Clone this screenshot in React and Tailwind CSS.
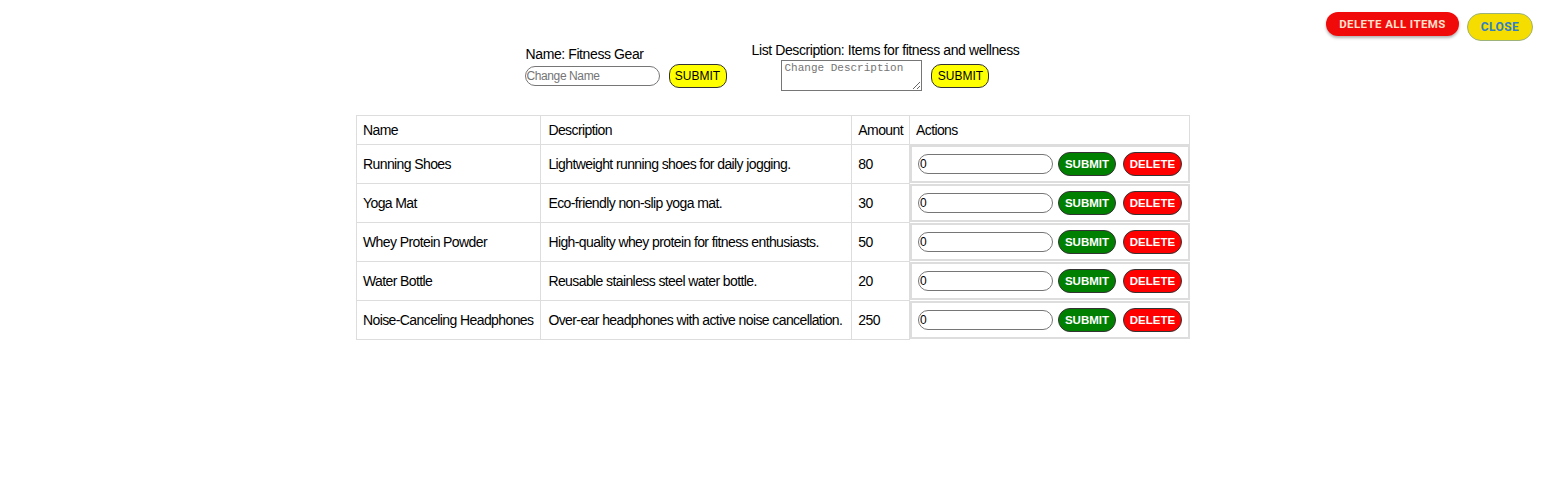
import { useState } from 'react';

const items = [
  { id: 1, name: 'Running Shoes', description: 'Lightweight running shoes for daily jogging.', amount: 80 },
  { id: 2, name: 'Yoga Mat', description: 'Eco-friendly non-slip yoga mat.', amount: 30 },
  { id: 3, name: 'Whey Protein Powder', description: 'High-quality whey protein for fitness enthusiasts.', amount: 50 },
  { id: 4, name: 'Water Bottle', description: 'Reusable stainless steel water bottle.', amount: 20 },
  { id: 5, name: 'Noise-Canceling Headphones', description: 'Over-ear headphones with active noise cancellation.', amount: 250 },
];

function ItemRow({ item }) {
  const [value, setValue] = useState('0');
  return (
    <tr>
      <td className="border border-[#dddddd] pl-[6px] pr-[7px] py-[11px] whitespace-nowrap">{item.name}</td>
      <td className="border border-[#dddddd] pl-[7px] pr-[9px] py-[11px] whitespace-nowrap">{item.description}</td>
      <td className="border border-[#dddddd] pl-[6px] pr-[6px] py-[11px] whitespace-nowrap">{item.amount}</td>
      <td className="border-2 border-[#dddddd] pl-[6px] py-[5px] flex items-center">
        <input
          value={value}
          onChange={(e) => setValue(e.target.value)}
          className="w-[135px] h-[20px] rounded-full border border-[#767676] px-[1px] text-[12px] tracking-normal text-black outline-none"
        />
        <button className="ml-[5px] h-[24px] w-[58px] rounded-[12px] border border-[#333] bg-[#008000] text-[11.5px] font-bold tracking-normal text-white">
          SUBMIT
        </button>
        <button className="ml-[7px] h-[24px] w-[59px] rounded-[12px] border border-[#333] bg-[#ff0000] text-[11.5px] font-bold tracking-normal text-white">
          DELETE
        </button>
      </td>
    </tr>
  );
}

export default function App() {
  return (
    <div className="min-h-[504px] bg-white text-black font-['Liberation_Sans',Arial,sans-serif] text-[14px] leading-[16px]">
      {/* top actions */}
      <div className="flex justify-end items-start gap-2 pt-3 pr-[15px]">
        <button className="h-[24px] w-[133px] rounded-full bg-[#f00a0a] text-[#ffe0cc] text-[11.5px] font-bold tracking-[0.4px] font-['Roboto',sans-serif] shadow-[0_2px_3px_rgba(0,0,0,0.3)]">
          DELETE ALL ITEMS
        </button>
        <button className="h-[28px] w-[66px] mt-[1px] rounded-full bg-[#f5dd00] border border-[#9cb27a] text-[#2f7fc8] text-[12px] font-bold tracking-[0.4px] font-['Roboto',sans-serif]">
          CLOSE
        </button>
      </div>

      {/* list name / description */}
      <div className="flex justify-center items-center gap-[25px] mt-[1px] pr-[4px] tracking-[-0.4px]">
        <div className="flex flex-col items-start">
          <span className="ml-[1px] mb-[2px]">Name: Fitness Gear</span>
          <div className="flex items-center">
            <input
              placeholder="Change Name"
              className="w-[135px] h-[20px] rounded-full border border-[#767676] px-[1px] text-[12px] placeholder:text-[#757575] outline-none"
            />
            <button className="ml-[9px] h-[24px] w-[58px] rounded-[10px] border border-[#333] bg-[#ffff00] text-[12px] tracking-normal text-black">
              SUBMIT
            </button>
          </div>
        </div>
        <div className="flex flex-col items-center">
          <span className="mb-[2px]">List Description: Items for fitness and wellness</span>
          <div className="flex items-center">
            <textarea
              placeholder="Change Description"
              className="w-[141px] h-[31px] border border-[#767676] px-[2px] py-[1px] text-[11px] leading-[13px] tracking-normal font-['Liberation_Mono',monospace] placeholder:text-[#757575] outline-none"
            />
            <button className="ml-[9px] h-[24px] w-[58px] rounded-[10px] border border-[#333] bg-[#ffff00] text-[12px] tracking-normal text-black">
              SUBMIT
            </button>
          </div>
        </div>
      </div>

      {/* items table */}
      <table className="mx-auto mt-[24px] border-collapse text-left tracking-[-0.6px] relative right-[1px]">
        <thead>
          <tr>
            <th className="border border-[#dddddd] pl-[6px] pr-[7px] py-[6px] font-normal">Name</th>
            <th className="border border-[#dddddd] pl-[7px] pr-[9px] py-[6px] font-normal">Description</th>
            <th className="border border-[#dddddd] pl-[6px] pr-[6px] py-[6px] font-normal">Amount</th>
            <th className="border border-[#dddddd] pl-[6px] pr-[7px] py-[6px] font-normal w-[280px]">Actions</th>
          </tr>
        </thead>
        <tbody>
          {items.map((item) => (
            <ItemRow key={item.id} item={item} />
          ))}
        </tbody>
      </table>
    </div>
  );
}
